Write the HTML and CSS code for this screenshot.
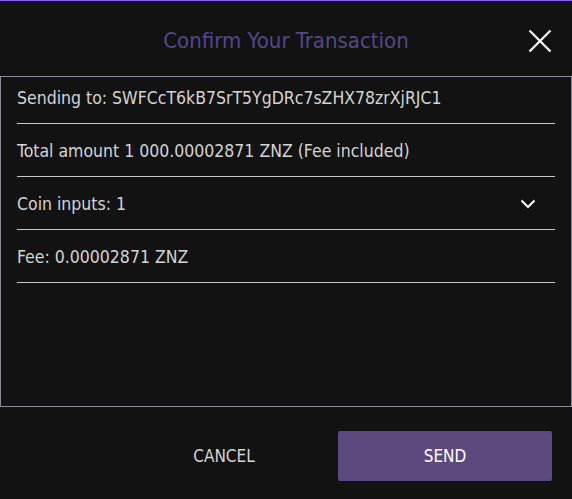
FILE: index.html
```html
<!DOCTYPE html>
<html>
<head>
<meta charset="utf-8">
<link rel="stylesheet" href="styles.css">
</head>
<body>
<div class="dialog">
  <header class="header">
    <h1 class="title">Confirm Your Transaction</h1>
    <button class="close" aria-label="Close">
      <svg width="24" height="24" viewBox="0 0 24 24"><path d="M1.5 1.5 L22.5 22.5 M22.5 1.5 L1.5 22.5" stroke="#ffffff" stroke-width="2.2" fill="none"/></svg>
    </button>
  </header>
  <div class="content">
    <div class="row">Sending to: SWFCcT6kB7SrT5YgDRc7sZHX78zrXjRJC1</div>
    <div class="row">Total amount 1 000.00002871 ZNZ (Fee included)</div>
    <div class="row row-expand">
      <span>Coin inputs: 1</span>
      <svg class="chevron" width="16" height="10" viewBox="0 0 16 10"><path d="M1.5 1.5 L8 8 L14.5 1.5" stroke="#ffffff" stroke-width="2" fill="none"/></svg>
    </div>
    <div class="row">Fee: 0.00002871 ZNZ</div>
  </div>
  <footer class="footer">
    <button class="btn btn-cancel">CANCEL</button>
    <button class="btn btn-send">SEND</button>
  </footer>
</div>
</body>
</html>
```

FILE: styles.css
```css
html, body {
  margin: 0;
  padding: 0;
  background: #121212;
}
body {
  font-family: "DejaVu Sans Condensed", "DejaVu Sans", sans-serif;
  color: #d4d4d4;
}
.dialog {
  width: 572px;
  height: 499px;
  box-sizing: border-box;
  border-top: 1px solid #8a5cf0;
  display: flex;
  flex-direction: column;
}
.header {
  height: 75px;
  display: flex;
  align-items: center;
  justify-content: center;
  position: relative;
}
.title {
  margin: 0;
  font-weight: normal;
  font-size: 22px;
  color: #55468a;
  padding-top: 4px;
}
.close {
  position: absolute;
  right: 20px;
  top: 28px;
  width: 24px;
  height: 24px;
  padding: 0;
  border: 0;
  background: none;
}
.close svg { display: block; }
.content {
  height: 331px;
  box-sizing: border-box;
  border: 1px solid #8c8a9a;
  padding: 0 16px 0 16px;
}
.row {
  padding: 16px 0 14px;
  line-height: 22px;
  font-size: 17.5px;
  border-bottom: 1px solid #c8c8c8;
  display: flex;
  align-items: center;
  justify-content: space-between;
}
.row:first-child { padding-top: 10px; }
.chevron { margin-right: 19px; }
.footer {
  flex: 1;
  display: flex;
  justify-content: flex-end;
  align-items: flex-start;
  padding: 24px 20px 0 0;
  gap: 7px;
}
.btn {
  width: 214px;
  height: 50px;
  border: 0;
  border-radius: 2px;
  font-family: inherit;
  font-size: 17px;
  cursor: pointer;
}
.btn-cancel {
  background: none;
  color: #d4d4d4;
}
.btn-send {
  background: #5c4a7e;
  color: #ffffff;
}
```
